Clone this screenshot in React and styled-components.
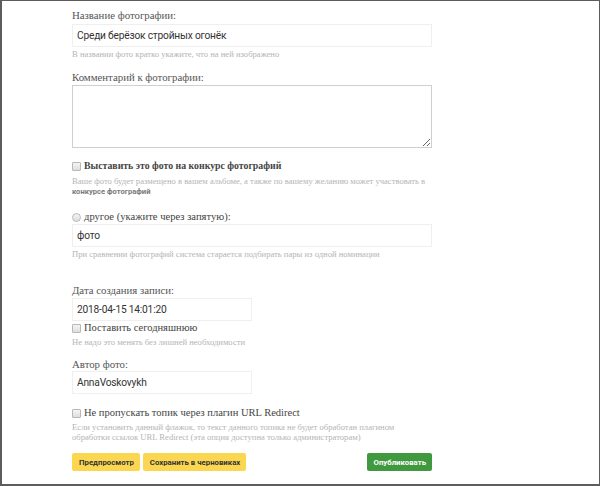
import styled, { createGlobalStyle } from "styled-components";

const Global = createGlobalStyle`
  html, body { margin: 0; padding: 0; background: #fff; }
  body { font-family: "Liberation Serif", serif; }
`;

const Frame = styled.div`
  box-sizing: border-box;
  width: 600px;
  height: 486px;
  border: 2px solid #5c5c5c;
  border-top-width: 1px;
  border-right-width: 1px;
  background: #fff;
  padding: 7px 0 0 70px;
  overflow: hidden;
`;

const Form = styled.form`
  width: 360px;
  display: flex;
  flex-direction: column;
`;

const Label = styled.label`
  display: block;
  font-family: "Liberation Serif", serif;
  font-size: 10.8px;
  line-height: 14px;
  color: #555;
  margin-top: ${(p) => p.$mt || 0}px;
  margin-bottom: ${(p) => p.$mb ?? 2}px;
`;

const TextInput = styled.input`
  box-sizing: border-box;
  width: ${(p) => p.$w || 360}px;
  height: 23px;
  margin: 0;
  padding: 0 4px;
  border: 1px solid #efefef;
  outline: none;
  font-family: Roboto, sans-serif;
  font-size: 10.2px;
  letter-spacing: -0.2px;
  color: #333;
  background: #fff;
`;

const TextArea = styled.textarea`
  box-sizing: border-box;
  width: 360px;
  height: 63px;
  margin: 0;
  padding: 4px;
  border: 1px solid #cfcfcf;
  outline: none;
  resize: vertical;
  display: block;
`;

const Hint = styled.div`
  font-family: "Liberation Serif", serif;
  font-size: 8.6px;
  line-height: ${(p) => p.$lh || 12}px;
  color: #b4b4b4;
  margin-top: ${(p) => p.$mt || 0}px;
  b {
    font-family: Roboto, sans-serif;
    font-size: 7.6px;
    font-weight: 700;
    color: #7a7a7a;
  }
`;

const CheckRow = styled.label`
  display: flex;
  align-items: center;
  gap: 3px;
  font-family: "Liberation Serif", serif;
  font-size: ${(p) => (p.$big ? 10.6 : p.$bold ? 9.8 : 10.5)}px;
  line-height: 14px;
  color: #444;
  font-weight: ${(p) => (p.$bold ? 700 : 400)};
  margin-top: ${(p) => p.$mt || 0}px;
`;

const Box = styled.input`
  appearance: none;
  box-sizing: border-box;
  width: 9px;
  height: 9px;
  margin: 0;
  border: 1px solid #b8b8b8;
  border-radius: ${(p) => (p.type === "radio" ? "50%" : "1px")};
  background: linear-gradient(#f4f4f4, #dedede);
  flex-shrink: 0;
`;

const Actions = styled.div`
  display: flex;
  align-items: center;
  gap: 3px;
  margin-top: 11px;
`;

const Button = styled.button`
  box-sizing: border-box;
  height: 18px;
  padding: 0 6px 0 7px;
  border: none;
  border-radius: 2px;
  font-family: Roboto, sans-serif;
  font-size: 7.8px;
  font-weight: 700;
  color: ${(p) => (p.$green ? "#fff" : "#333")};
  background: ${(p) => (p.$green ? "#41993f" : "#fbd751")};
  margin-left: ${(p) => (p.$push ? "auto" : "0")};
  cursor: pointer;
`;

export default function App() {
  return (
    <>
      <Global />
      <Frame>
        <Form onSubmit={(e) => e.preventDefault()}>
          <Label>Название фотографии:</Label>
          <TextInput defaultValue="Среди берёзок стройных огонёк" />
          <Hint $mt={1}>В названии фото кратко укажите, что на ней изображено</Hint>

          <Label $mt={10} $mb={1}>Комментарий к фотографии:</Label>
          <TextArea />

          <CheckRow $mt={11} $bold>
            <Box type="checkbox" />
            Выставить это фото на конкурс фотографий
          </CheckRow>
          <Hint $mt={3} $lh={10}>
            Ваше фото будет размещено в вашем альбоме, а также по вашему желанию может участвовать в{" "}
            <b>конкурсе фотографий</b>
          </Hint>

          <CheckRow $mt={13} $big>
            <Box type="radio" name="nom" />
            другое (укажите через запятую):
          </CheckRow>
          <TextInput defaultValue="фото" />
          <Hint $mt={1}>При сравнении фотографий система старается подбирать пары из одной номинации</Hint>

          <Label $mt={23} $mb={1}>Дата создания записи:</Label>
          <TextInput $w={180} defaultValue="2018-04-15 14:01:20" />
          <CheckRow>
            <Box type="checkbox" />
            Поставить сегодняшнюю
          </CheckRow>
          <Hint $mt={1}>Не надо это менять без лишней необходимости</Hint>

          <Label $mt={9} $mb={0}>Автор фото:</Label>
          <TextInput $w={180} defaultValue="AnnaVoskovykh" />

          <CheckRow $mt={12}>
            <Box type="checkbox" />
            Не пропускать топик через плагин URL Redirect
          </CheckRow>
          <Hint $mt={2} $lh={10}>
            Если установить данный флажок, то текст данного топика не будет обработан плагином обработки ссылок URL
            Redirect (эта опция доступна только администраторам)
          </Hint>

          <Actions>
            <Button type="button">Предпросмотр</Button>
            <Button type="button">Сохранить в черновиках</Button>
            <Button type="submit" $green $push>
              Опубликовать
            </Button>
          </Actions>
        </Form>
      </Frame>
    </>
  );
}
